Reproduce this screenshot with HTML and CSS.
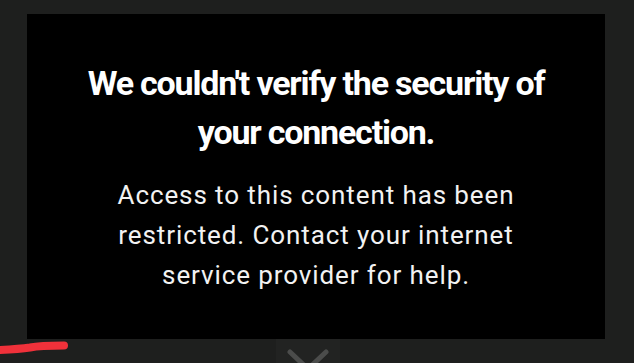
FILE: index.html
```html
<!DOCTYPE html>
<html lang="en">
<head>
<meta charset="utf-8">
<title>Restricted</title>
<link rel="stylesheet" href="styles.css">
</head>
<body>
<main class="panel">
  <h1 class="title">We couldn't verify the security of<br>your connection.</h1>
  <p class="message">Access to this content has been<br>restricted. Contact your internet<br>service provider for help.</p>
</main>
<div class="footer">
  <svg class="scribble" width="70" height="16" viewBox="0 0 70 16" aria-hidden="true">
    <path d="M-2 11 C 10 10.5, 20 10, 30 8.5 C 40 6.5, 52 6.5, 64 6.5" stroke="#f0313a" stroke-width="8" stroke-linecap="round" fill="none"/>
  </svg>
  <div class="handle">
    <svg width="64" height="24" viewBox="0 0 64 24" aria-hidden="true">
      <path d="M14 13 L32 30 L50 13" stroke="#4b4c4b" stroke-width="5" stroke-linecap="round" fill="none"/>
    </svg>
  </div>
</div>
</body>
</html>
```
FILE: styles.css
```css
html, body {
  margin: 0;
  padding: 0;
  height: 100%;
  overflow: hidden;
}
body {
  background: #1e1f1e;
  font-family: Roboto, "Liberation Sans", sans-serif;
  color: #fff;
}
.panel {
  box-sizing: border-box;
  margin: 14px 29px 0 27px;
  height: 325px;
  background: #000;
  padding-top: 45px;
  text-align: center;
}
.title {
  margin: 0;
  font-size: 34px;
  font-weight: 700;
  line-height: 49px;
  letter-spacing: -1.2px;
}
.message {
  margin: 18px 0 0;
  font-size: 26px;
  font-weight: 400;
  line-height: 40px;
  letter-spacing: 0.9px;
  color: #f2f2f2;
}
.footer {
  position: relative;
  height: 24px;
}
.scribble {
  position: absolute;
  left: 0;
  top: 0;
}
.handle {
  position: absolute;
  left: 276px;
  top: 0;
  width: 64px;
  height: 24px;
  background: #222322;
}
```
